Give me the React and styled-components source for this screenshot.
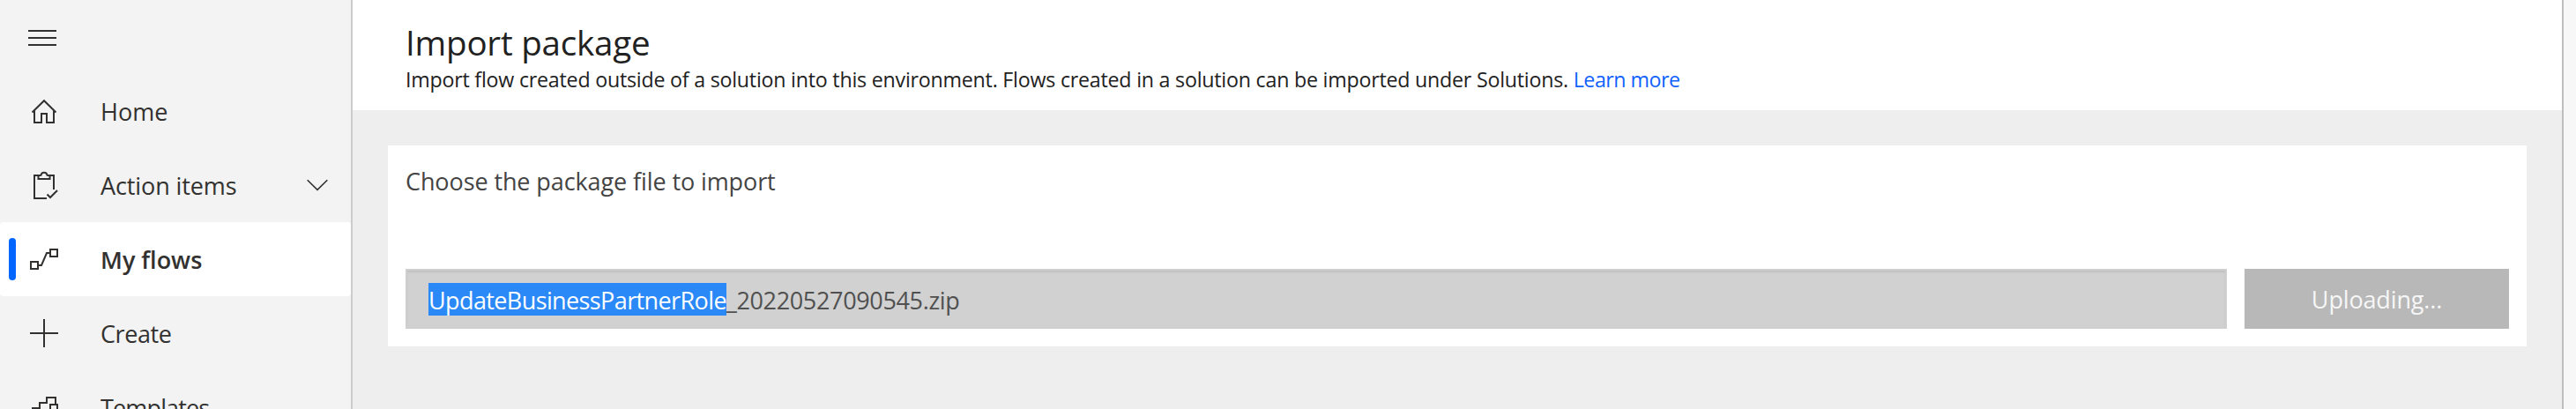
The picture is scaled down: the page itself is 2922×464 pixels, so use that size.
import React from "react";
import styled, { createGlobalStyle } from "styled-components";

const GlobalStyle = createGlobalStyle`
  *, *::before, *::after { box-sizing: border-box; }
  body {
    margin: 0;
    overflow: hidden;
    font-family: "Open Sans", "Noto Sans", sans-serif;
    color: #323130;
  }
`;

const Page = styled.div`
  display: flex;
  height: 100vh;
  overflow: hidden;
  background: #eeeeee;
`;

const Sidebar = styled.nav`
  flex: 0 0 400px;
  border-right: 2px solid #cccccc;
  background: #f3f3f3;
  overflow: hidden;
`;

const MenuButton = styled.button`
  display: block;
  width: 100%;
  height: 84px;
  padding: 34px 32px 32px;
  border: 0;
  background: none;
  text-align: left;

  svg { display: block; }
`;

const NavItem = styled.a`
  display: flex;
  align-items: center;
  height: 84px;
  padding: 0 26px 0 10px;
  border-radius: 4px;
  background: ${({ $active }) => ($active ? "#ffffff" : "transparent")};
  font-weight: ${({ $active }) => ($active ? 600 : 400)};
`;

const Marker = styled.span`
  flex: 0 0 8px;
  height: 48px;
  margin-right: 14px;
  border-radius: 4px;
  background: ${({ $active }) => ($active ? "#0066ff" : "transparent")};
`;

const Icon = styled.svg`
  flex: none;
  fill: none;
  stroke: #323130;
  stroke-width: ${({ $weight }) => $weight || 2};
`;

const NavLabel = styled.span`
  flex: 1;
  margin-left: 46px;
  padding-top: 2px;
  font-size: 27px;
  line-height: 82px;
  letter-spacing: ${({ $tracking }) => $tracking || 0}px;
  white-space: nowrap;
`;

const Main = styled.main`
  flex: 1;
  min-width: 0;
`;

const Header = styled.header`
  height: 125px;
  padding: 23px 60px 0;
  background: #ffffff;
`;

const Title = styled.h1`
  margin: 0;
  color: #212121;
  font-size: 38.5px;
  font-weight: 400;
  line-height: 50px;
  letter-spacing: -0.19px;
`;

const Subtitle = styled.p`
  margin: 1px 0 0;
  color: #212121;
  font-size: 23.2px;
  line-height: 32px;
  letter-spacing: -0.213px;
  white-space: nowrap;
`;

const Link = styled.a`
  color: #0f62fe;
  letter-spacing: -0.5px;
`;

const Card = styled.section`
  height: 228px;
  margin: 40px 40px 0;
  padding: 22px 20px 20px;
  background: #ffffff;
`;

const Prompt = styled.div`
  margin-bottom: 80px;
  color: #444444;
  font-size: 27px;
  line-height: 38px;
  letter-spacing: -0.1px;
`;

const UploadRow = styled.div`
  display: flex;
  gap: 20px;
  height: 68px;
`;

const FileField = styled.div`
  display: flex;
  flex: 1;
  align-items: flex-start;
  padding: 14px 24px 0;
  border: 2px solid #cfcfcf;
  background: #d1d1d1;
  box-shadow: inset 0 2px 2px rgba(0, 0, 0, 0.075);
  color: #505050;
  font-size: 27px;
  line-height: 39px;
  letter-spacing: -0.35px;
`;

const Selected = styled.span`
  height: 37px;
  background: #2a88f7;
  color: #ffffff;
  letter-spacing: -0.61px;
`;

const UploadButton = styled.button`
  flex: 0 0 300px;
  padding: 2px 0 0;
  border: 0;
  background: #b8b8b8;
  color: #f6f6f6;
  font: 400 27px/66px "Open Sans", "Noto Sans", sans-serif;
  letter-spacing: -0.15px;
`;

const Gutter = styled.aside`
  flex: 0 0 16px;
  border-left: 2px solid #bebebe;
  background: #f7f7f7;
`;

const glyphs = {
  home: <path d="M4.5 19.5 18 6.2l13.5 13.3M7 17v14h8V21h6v10h8V17" />,
  actions: (
    <path d="M14.5 7H7v26h14M21.5 7H29v16M11.5 7v4h13V7M14.5 7.5c0-5 7-5 7 0M21.5 28.5 25 32l8-8" />
  ),
  flows: (
    <>
      <rect x="3" y="21" width="8" height="8" />
      <rect x="25" y="7" width="8" height="8" />
      <path d="M12 25h3l6-14h3" />
    </>
  ),
  create: <path d="M18 2v32M2 18h32" />,
  templates: (
    <>
      <path d="M4 19h9v-6h8V7h10v7" />
      <rect x="25" y="15" width="8" height="8" />
    </>
  ),
};

const items = [
  { label: "Home", glyph: "home" },
  { label: "Action items", glyph: "actions", tracking: -0.1, expandable: true },
  { label: "My flows", glyph: "flows", active: true },
  { label: "Create", glyph: "create", tracking: -0.4 },
  { label: "Templates", glyph: "templates", tracking: -0.85 },
];

export default function App() {
  return (
    <>
      <GlobalStyle />
      <Page>
        <Sidebar>
          <MenuButton aria-label="Menu">
            <Icon width="32" height="18" viewBox="0 0 32 18">
              <path d="M0 1h32M0 9h32M0 17h32" />
            </Icon>
          </MenuButton>
          {items.map(({ label, glyph, active, tracking, expandable }) => (
            <NavItem key={label} $active={active}>
              <Marker $active={active} />
              <Icon width="36" height="36" viewBox="0 0 36 36">
                {glyphs[glyph]}
              </Icon>
              <NavLabel $tracking={tracking}>{label}</NavLabel>
              {expandable && (
                <Icon $weight={1.6} width="24" height="14" viewBox="0 0 24 14">
                  <path d="M.7 1.2 12 12.4 23.3 1.2" />
                </Icon>
              )}
            </NavItem>
          ))}
        </Sidebar>
        <Main>
          <Header>
            <Title>Import package</Title>
            <Subtitle>
              Import flow created outside of a solution into this environment. Flows created in a
              solution can be imported under Solutions. <Link>Learn more</Link>
            </Subtitle>
          </Header>
          <Card>
            <Prompt>Choose the package file to import</Prompt>
            <UploadRow>
              <FileField>
                <Selected>UpdateBusinessPartnerRole</Selected>
                <span>_20220527090545.zip</span>
              </FileField>
              <UploadButton>Uploading...</UploadButton>
            </UploadRow>
          </Card>
        </Main>
        <Gutter />
      </Page>
    </>
  );
}
